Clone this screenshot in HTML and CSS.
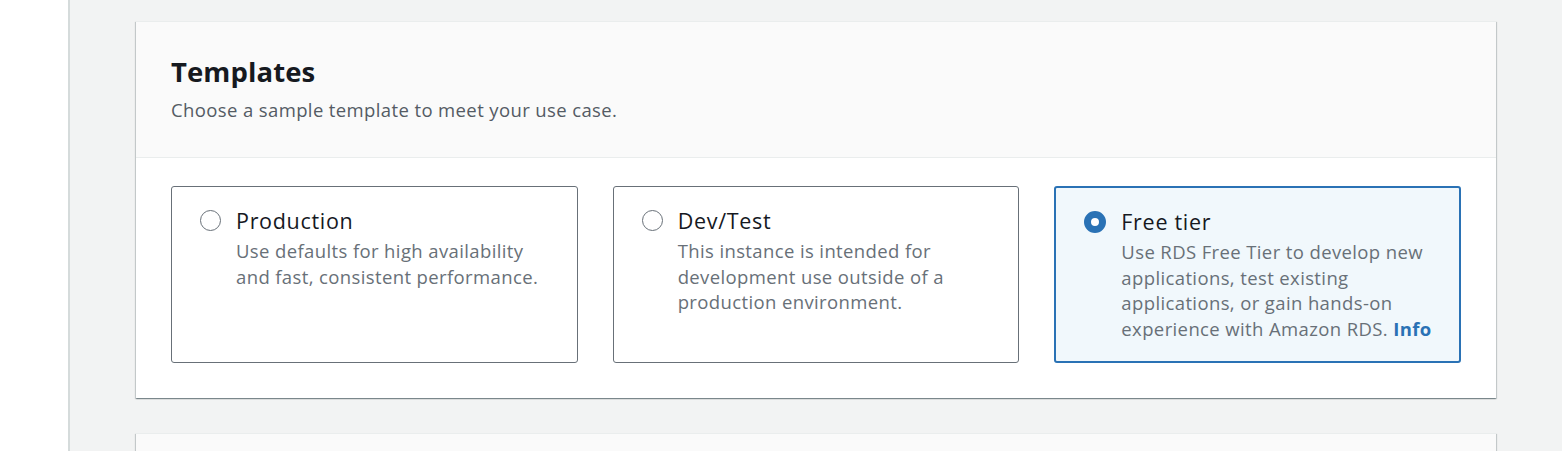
FILE: index.html
```html
<!DOCTYPE html>
<html lang="en">
<head>
<meta charset="utf-8">
<title>Templates</title>
<link rel="stylesheet" href="styles.css">
</head>
<body>
<div class="page">
  <aside class="side"></aside>
  <main class="main">
    <section class="container">
      <header class="container-header">
        <h2 class="title">Templates</h2>
        <p class="subtitle">Choose a sample template to meet your use case.</p>
      </header>
      <div class="container-body">
        <div class="tiles">
          <label class="tile">
            <span class="radio"></span>
            <span class="tile-text">
              <span class="tile-title">Production</span>
              <span class="tile-desc">Use defaults for high availability and fast, consistent performance.</span>
            </span>
          </label>
          <label class="tile">
            <span class="radio"></span>
            <span class="tile-text">
              <span class="tile-title">Dev/Test</span>
              <span class="tile-desc">This instance is intended for development use outside of a production environment.</span>
            </span>
          </label>
          <label class="tile tile-selected">
            <span class="radio radio-checked"></span>
            <span class="tile-text">
              <span class="tile-title">Free tier</span>
              <span class="tile-desc">Use RDS Free Tier to develop new applications, test existing applications, or gain hands-on experience with Amazon RDS. <a class="info" href="#">Info</a></span>
            </span>
          </label>
        </div>
      </div>
    </section>
    <section class="container container-next">
      <header class="container-header container-header-next"></header>
    </section>
  </main>
</div>
</body>
</html>
```
FILE: styles.css
```css
* { box-sizing: border-box; }
html, body { margin: 0; padding: 0; }
body {
  font-family: "Open Sans", "Noto Sans", sans-serif;
  background: #ffffff;
  height: 451px;
  overflow: hidden;
}
.page {
  display: flex;
  height: 451px;
}
.side {
  width: 68px;
  flex: none;
  background: #ffffff;
}
.main {
  flex: 1;
  background: #f2f3f3;
  border-left: 2px solid #d5dbdb;
  padding: 21px 66px 0 66px;
  display: flex;
  flex-direction: column;
  gap: 35px;
}
.container {
  background: #ffffff;
  border-top: 1px solid #eaeded;
  box-shadow: 0 1px 1px 0 rgba(0,28,36,0.3), 1px 1px 1px 0 rgba(0,28,36,0.15), -1px 1px 1px 0 rgba(0,28,36,0.15);
}
.container-header {
  background: #fafafa;
  border-bottom: 1px solid #eaeded;
  padding: 32px 35px 34px;
}
.title {
  margin: 0;
  font-size: 27.5px;
  line-height: 36px;
  font-weight: 700;
  color: #16191f;
  letter-spacing: 0.1px;
}
.subtitle {
  margin: 7px 0 0;
  font-size: 18.5px;
  line-height: 26px;
  color: #545b64;
  letter-spacing: 0.38px;
}
.container-body {
  padding: 28px 35px 35px;
}
.tiles {
  display: grid;
  grid-template-columns: repeat(3, 1fr);
  gap: 35px;
}
.tile {
  display: flex;
  align-items: flex-start;
  gap: 15px;
  height: 177px;
  border: 1.5px solid #687078;
  border-radius: 3px;
  padding: 20px 20px 20px 28px;
  background: #ffffff;
}
.tile-selected {
  border: 2px solid #2a72b5;
  background: #f1f8fc;
  padding-left: 28px;
}
.radio {
  flex: none;
  width: 21px;
  height: 21px;
  margin-top: 3px;
  border: 1.5px solid #687078;
  border-radius: 50%;
  background: #ffffff;
}
.radio-checked {
  width: 22px;
  height: 22px;
  border: 7px solid #2a72b5;
  background: #ffffff;
}
.tile-text {
  display: flex;
  flex-direction: column;
}
.tile-title {
  font-size: 21.5px;
  line-height: 28px;
  margin-bottom: 3px;
  color: #16191f;
  letter-spacing: 0.7px;
}
.tile-desc {
  font-size: 18.5px;
  line-height: 25.5px;
  color: #687078;
  letter-spacing: 0.38px;
}
.info {
  color: #2a72b5;
  font-weight: 700;
  text-decoration: none;
}
.container-header-next {
  height: 60px;
  border-bottom: none;
}
```
